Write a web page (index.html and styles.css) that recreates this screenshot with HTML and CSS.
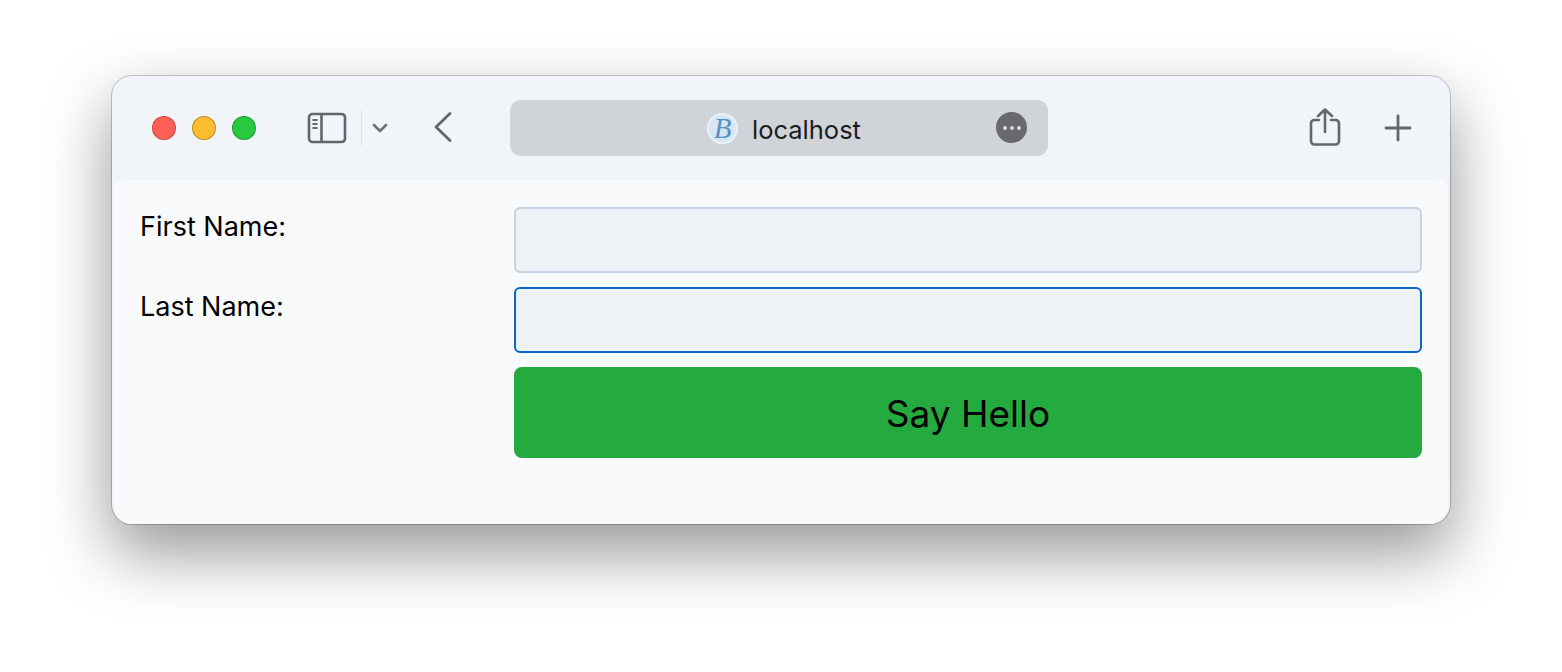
FILE: index.html
```html
<!DOCTYPE html>
<html lang="en">
<head>
  <meta charset="UTF-8">
  <meta name="viewport" content="width=device-width, initial-scale=1.0">
  <title>localhost</title>
  <link rel="stylesheet" href="styles.css">
</head>
<body>

  <div class="window">
    <div class="toolbar">
      <div class="lights">
        <span class="light red"></span>
        <span class="light yellow"></span>
        <span class="light green"></span>
      </div>

      <svg class="icon sidebar-icon" width="40" height="32" viewBox="0 0 40 32" fill="none" stroke="#63666c" stroke-width="2.6">
        <rect x="2" y="2" width="36" height="28" rx="3.5"/>
        <path d="M14.5 2v28"/>
        <path d="M5.5 8h5M5.5 12h5M5.5 16h5" stroke-width="1.8"/>
      </svg>
      <span class="divider"></span>
      <svg class="icon chevron-icon" width="16" height="10" viewBox="0 0 16 10" fill="none" stroke="#6f7278" stroke-width="2.6" stroke-linecap="round" stroke-linejoin="round">
        <path d="M2 2l6 6 6-6"/>
      </svg>
      <svg class="icon back-icon" width="20" height="32" viewBox="0 0 20 32" fill="none" stroke="#63666c" stroke-width="2.8" stroke-linecap="round" stroke-linejoin="round">
        <path d="M17 2.500L3 16l14 13.500"/>
      </svg>

      <div class="address-bar">
        <span class="favicon">B</span>
        <span class="address-text">localhost</span>
        <span class="more-btn"><i></i><i></i><i></i></span>
      </div>

      <svg class="icon share-icon" width="32" height="38" viewBox="0 0 32 38" fill="none" stroke="#63666c" stroke-width="2.6" stroke-linecap="round" stroke-linejoin="round">
        <path d="M10 12H5.500A3.500 3.500 0 0 0 2 15.500V33A3.500 3.500 0 0 0 5.500 36.500H26.500A3.500 3.500 0 0 0 30 33V15.500A3.500 3.500 0 0 0 26.500 12H22"/>
        <path d="M16 24V2M9 8l7-6.500L23 8"/>
      </svg>
      <svg class="icon plus-icon" width="28" height="28" viewBox="0 0 28 28" fill="none" stroke="#63666c" stroke-width="2.8" stroke-linecap="round">
        <path d="M14 2v24M2 14h24"/>
      </svg>
    </div>

    <div class="content">
      <form class="hello-form">
        <label class="field-label" for="first_name">First Name:</label>
        <input class="field" type="text" id="first_name" name="first_name">
        <label class="field-label" for="last_name">Last Name:</label>
        <input class="field field-focus" type="text" id="last_name" name="last_name">
        <button class="submit-btn" type="button">Say Hello</button>
      </form>
    </div>
  </div>

</body>
</html>
```

FILE: styles.css
```css
html, body {
  height: 100%;
}
body {
  margin: 0;
  padding-top: 76px;
  box-sizing: border-box;
  overflow: hidden;
  background-color: #ffffff;
  font-family: Inter, 'Liberation Sans', sans-serif;
  color: #000000;
}

.window {
  width: 1338px;
  height: 448px;
  margin: 0 auto;
  box-sizing: border-box;
  display: flex;
  flex-direction: column;
  background-color: #f1f4f9;
  border-radius: 20px;
  box-shadow:
    0 0 0 1px rgba(0, 0, 0, 0.2),
    0 28px 64px 2px rgba(0, 0, 0, 0.4);
}

.toolbar {
  height: 104px;
  flex: none;
  display: flex;
  align-items: center;
  padding: 0 0 0 40px;
  box-sizing: border-box;
}
.icon {
  display: block;
  flex: none;
}

.lights {
  display: flex;
  flex: none;
  gap: 16px;
  margin-right: 51px;
}
.light {
  width: 24px;
  height: 24px;
  flex: none;
  box-sizing: border-box;
  border-radius: 50%;
  border: 1px solid rgba(0, 0, 0, 0.25);
}
.red { background-color: #ff5f57; }
.yellow { background-color: #febc2e; }
.green { background-color: #28c840; }

.divider {
  width: 1px;
  height: 36px;
  flex: none;
  margin-left: 14px;
  background-color: #dfe2e7;
}
.chevron-icon {
  margin-left: 10px;
}
.back-icon {
  margin-left: 45px;
  margin-top: -2px;
}

.address-bar {
  width: 538px;
  height: 56px;
  margin-left: 57px;
  flex: none;
  position: relative;
  display: flex;
  align-items: center;
  box-sizing: border-box;
  padding-left: 197px;
  background-color: #d0d3d8;
  border-radius: 11px;
}
.favicon {
  width: 31px;
  height: 31px;
  flex: none;
  display: flex;
  align-items: center;
  justify-content: center;
  border-radius: 50%;
  background-color: #d6e6f3;
  box-shadow: inset 0 0 0 2px #e9f1f8;
  color: #5b90c2;
  font-family: 'Liberation Serif', serif;
  font-style: italic;
  font-size: 29px;
}
.address-text {
  margin-left: 14px;
  padding-top: 4px;
  font-size: 25.5px;
  line-height: 32px;
  color: #1b1c1e;
}
.more-btn {
  position: absolute;
  right: 21px;
  top: 12px;
  width: 31px;
  height: 31px;
  display: flex;
  align-items: center;
  justify-content: center;
  gap: 3px;
  border-radius: 50%;
  background-color: #69696b;
}
.more-btn i {
  width: 4px;
  height: 4px;
  border-radius: 50%;
  background-color: #d9dade;
}

.share-icon {
  margin-left: 261px;
  margin-top: -3px;
}
.plus-icon {
  margin-left: 43px;
  margin-top: -1px;
}

.content {
  flex: 1;
  margin: 0 2px;
  padding: 27px 26px 0 26px;
  background-color: #f9fafc;
  border-radius: 10px 10px 18px 18px;
}

.hello-form {
  display: grid;
  grid-template-columns: 374px 908px;
  grid-auto-rows: 66px;
  row-gap: 14px;
}
.field-label {
  font-size: 27px;
  line-height: 40px;
}
.field {
  display: block;
  width: 100%;
  height: 66px;
  box-sizing: border-box;
  margin: 0;
  background-color: #edf2f6;
  border: 2px solid #c7d5e6;
  border-radius: 6px;
  outline: none;
}
.field-focus {
  border-color: #0b64c8;
}
.submit-btn {
  grid-column: 2;
  grid-row: 3;
  height: 91px;
  padding: 2px 0 0;
  border: none;
  border-radius: 8px;
  background-color: #25aa3f;
  color: #000000;
  font-family: inherit;
  font-size: 37px;
  cursor: pointer;
}
```
